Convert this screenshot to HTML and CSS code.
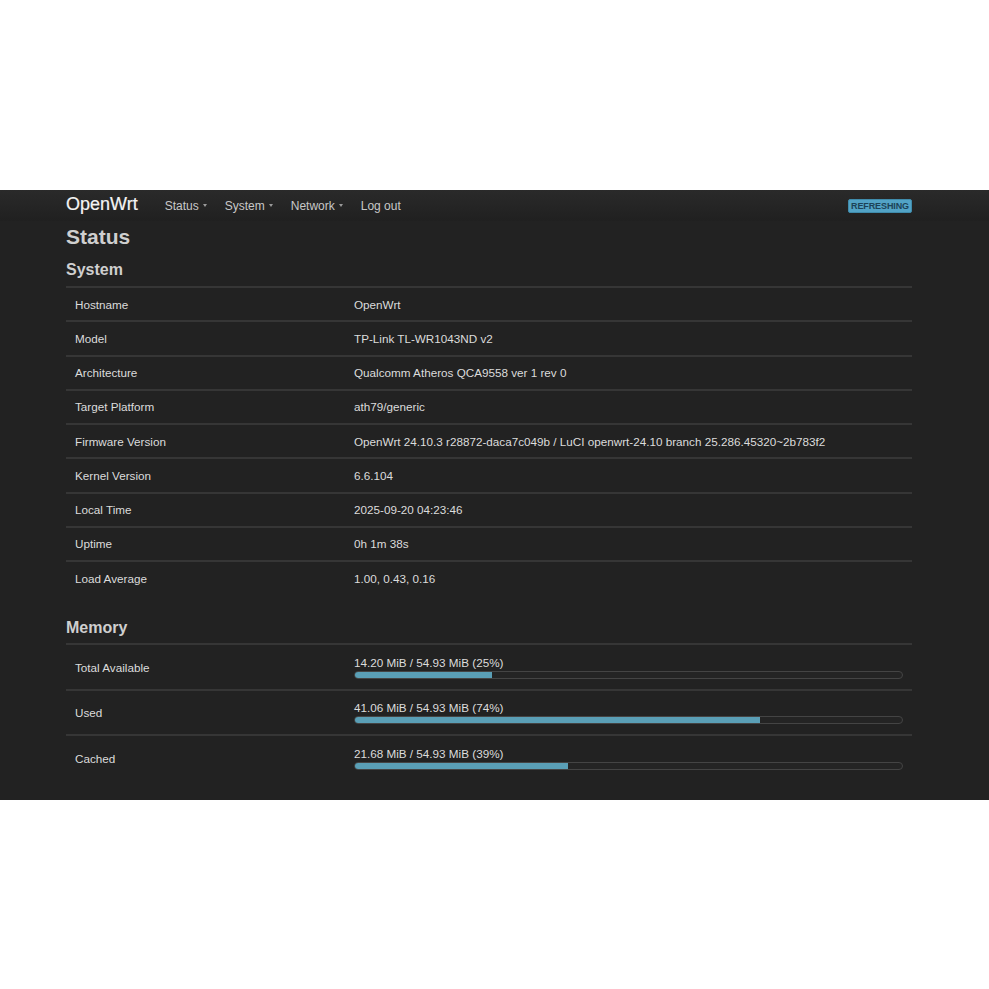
FILE: index.html
```html
<!DOCTYPE html>
<html>
<head>
<meta charset="utf-8">
<title>OpenWrt - Status</title>
<link rel="stylesheet" href="styles.css">
</head>
<body>
<div class="page">
  <header class="header">
    <div class="container header-inner">
      <span class="brand">OpenWrt</span>
      <nav class="nav">
        <span class="nav-item">Status <span class="caret"></span></span>
        <span class="nav-item">System <span class="caret"></span></span>
        <span class="nav-item">Network <span class="caret"></span></span>
        <span class="nav-item">Log out</span>
      </nav>
      <span class="badge">REFRESHING</span>
    </div>
  </header>
  <main class="container">
    <h2 class="page-title">Status</h2>
    <h3 class="section-title">System</h3>
    <div class="table">
      <div class="row"><div class="cell-label">Hostname</div><div class="cell-value">OpenWrt</div></div>
      <div class="row"><div class="cell-label">Model</div><div class="cell-value">TP-Link TL-WR1043ND v2</div></div>
      <div class="row"><div class="cell-label">Architecture</div><div class="cell-value">Qualcomm Atheros QCA9558 ver 1 rev 0</div></div>
      <div class="row"><div class="cell-label">Target Platform</div><div class="cell-value">ath79/generic</div></div>
      <div class="row"><div class="cell-label">Firmware Version</div><div class="cell-value">OpenWrt 24.10.3 r28872-daca7c049b / LuCI openwrt-24.10 branch 25.286.45320~2b783f2</div></div>
      <div class="row"><div class="cell-label">Kernel Version</div><div class="cell-value">6.6.104</div></div>
      <div class="row"><div class="cell-label">Local Time</div><div class="cell-value">2025-09-20 04:23:46</div></div>
      <div class="row"><div class="cell-label">Uptime</div><div class="cell-value">0h 1m 38s</div></div>
      <div class="row"><div class="cell-label">Load Average</div><div class="cell-value">1.00, 0.43, 0.16</div></div>
    </div>
    <h3 class="section-title memory-title">Memory</h3>
    <div class="table memory-table">
      <div class="row row-mem"><div class="cell-label">Total Available</div><div class="cell-value"><div class="bar-text">14.20 MiB / 54.93 MiB (25%)</div><div class="bar"><div class="bar-fill" style="width:25%"></div></div></div></div>
      <div class="row row-mem"><div class="cell-label">Used</div><div class="cell-value"><div class="bar-text">41.06 MiB / 54.93 MiB (74%)</div><div class="bar"><div class="bar-fill" style="width:74%"></div></div></div></div>
      <div class="row row-mem"><div class="cell-label">Cached</div><div class="cell-value"><div class="bar-text">21.68 MiB / 54.93 MiB (39%)</div><div class="bar"><div class="bar-fill" style="width:39%"></div></div></div></div>
    </div>
  </main>
</div>
</body>
</html>
```

FILE: styles.css
```css
html, body {
  margin: 0;
  padding: 0;
  background: #ffffff;
}

body {
  font-family: "Liberation Sans", Arial, sans-serif;
  color: #dddddd;
}

.page {
  margin-top: 190px;
  height: 610px;
  background: #222222;
  overflow: hidden;
}

.container {
  width: 846px;
  margin-left: 66px;
}

.header {
  height: 31px;
  background: linear-gradient(#2a2a2a, #202020);
}

.header-inner {
  display: flex;
  align-items: center;
  height: 31px;
}

.brand {
  font-size: 18px;
  color: #f4f4f4;
  margin-right: 27px;
  position: relative;
  top: -1px;
  -webkit-text-stroke: 0.2px #f4f4f4;
}

.nav {
  display: flex;
  align-items: center;
  gap: 18px;
  flex: 1;
}

.nav-item {
  font-size: 12px;
  color: #c8c8c8;
  display: flex;
  align-items: center;
  gap: 4px;
}

.caret {
  width: 0;
  height: 0;
  border-left: 2.5px solid transparent;
  border-right: 2.5px solid transparent;
  border-top: 3px solid #9a9a9a;
}

.badge {
  font-size: 9px;
  font-weight: bold;
  color: #1c4257;
  background: #52a3c6;
  border: 1px solid #3f8bab;
  border-radius: 2px;
  padding: 1px 2px;
  line-height: 10px;
  letter-spacing: -0.1px;
}

.page-title {
  margin: 3px 0 0;
  font-size: 21px;
  line-height: 26px;
  font-weight: bold;
  color: #cfcfcf;
}

.section-title {
  margin: 8px 0 0;
  font-size: 16px;
  line-height: 23px;
  font-weight: bold;
  color: #cfcfcf;
}

.memory-title {
  margin-top: 22px;
}

.table {
  margin-top: 5px;
}

.memory-table {
  margin-top: 4px;
}

.row {
  display: grid;
  grid-template-columns: 288px 1fr;
  align-items: center;
  height: 34.25px;
  box-sizing: border-box;
  border-top: 2px solid #363636;
  font-size: 11.7px;
  color: #dcdcdc;
}

.cell-label {
  padding-left: 9px;
}

.cell-value {
  padding-right: 9px;
}

.row-mem {
  height: 45.5px;
}

.bar-text {
  line-height: 14px;
  color: #dcdcdc;
}

.bar {
  margin-top: 1px;
  height: 6px;
  border: 1px solid #444444;
  border-radius: 4px;
  background: #242424;
  overflow: hidden;
}

.bar-fill {
  height: 100%;
  background: #5a9fb6;
}
```
